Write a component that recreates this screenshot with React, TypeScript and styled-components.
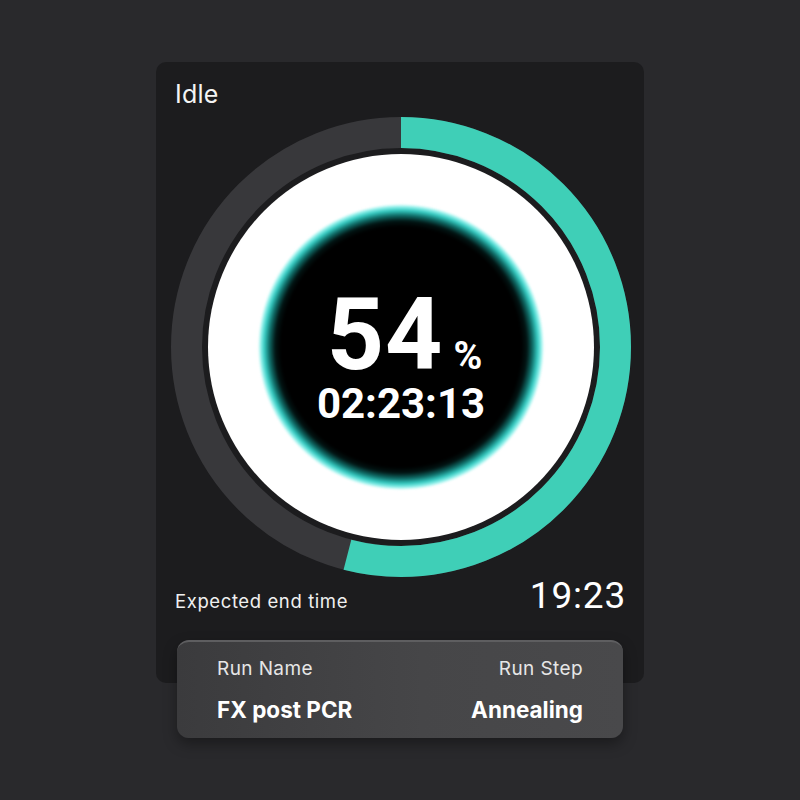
import styled, { createGlobalStyle } from "styled-components";

const GlobalStyle = createGlobalStyle`
  html, body {
    margin: 0;
    padding: 0;
    background: #29292c;
  }
  body {
    font-family: Inter, "Noto Sans", sans-serif;
    color: #ffffff;
  }
`;

const RING_SIZE = 460;
const RING_STROKE = 31;
const progress = 54;

export default function App() {
  const r = (RING_SIZE - RING_STROKE) / 2;
  const circumference = 2 * Math.PI * r;
  const filled = (circumference * progress) / 100;

  return (
    <Page>
      <GlobalStyle />
      <Card>
        <Status>Idle</Status>
        <Gauge>
          <svg width={RING_SIZE} height={RING_SIZE} viewBox={`0 0 ${RING_SIZE} ${RING_SIZE}`}>
            <circle
              cx={RING_SIZE / 2}
              cy={RING_SIZE / 2}
              r={r}
              fill="none"
              stroke="#38383b"
              strokeWidth={RING_STROKE}
            />
            <circle
              cx={RING_SIZE / 2}
              cy={RING_SIZE / 2}
              r={r}
              fill="none"
              stroke="#3fcfb7"
              strokeWidth={RING_STROKE}
              strokeDasharray={`${filled} ${circumference}`}
              transform={`rotate(-90 ${RING_SIZE / 2} ${RING_SIZE / 2})`}
            />
          </svg>
          <Dial>
            <Core>
              <Percent>
                54<small>%</small>
              </Percent>
              <Timer>02:23:13</Timer>
            </Core>
          </Dial>
        </Gauge>
        <EndRow>
          <EndLabel>Expected end time</EndLabel>
          <EndTime>19:23</EndTime>
        </EndRow>
      </Card>
      <InfoPanel>
        <InfoCol>
          <InfoLabel>Run Name</InfoLabel>
          <InfoValue>FX post PCR</InfoValue>
        </InfoCol>
        <InfoCol $right>
          <InfoLabel>Run Step</InfoLabel>
          <InfoValue>Annealing</InfoValue>
        </InfoCol>
      </InfoPanel>
    </Page>
  );
}

const Page = styled.div`
  width: 800px;
  height: 800px;
  box-sizing: border-box;
  padding-top: 62px;
  display: flex;
  flex-direction: column;
  align-items: center;
`;

const Card = styled.div`
  width: 488px;
  height: 621px;
  box-sizing: border-box;
  padding: 16px 19px 0 19px;
  background: #1c1c1e;
  border-radius: 10px;
  display: flex;
  flex-direction: column;
`;

const Status = styled.div`
  font-size: 25px;
  line-height: 32px;
  font-weight: 400;
  color: #f4f4f4;
  letter-spacing: 0.2px;
`;

const Gauge = styled.div`
  position: relative;
  width: ${RING_SIZE}px;
  height: ${RING_SIZE}px;
  margin: 7px 0 0 -4px;

  svg {
    display: block;
  }
`;

const Dial = styled.div`
  position: absolute;
  left: 50%;
  top: 50%;
  width: 386px;
  height: 386px;
  transform: translate(-50%, -50%);
  border-radius: 50%;
  background: #ffffff;
  display: flex;
  align-items: center;
  justify-content: center;
`;

const Core = styled.div`
  position: relative;
  width: 286px;
  height: 286px;
  display: flex;
  flex-direction: column;
  align-items: center;
  justify-content: center;
  font-family: Roboto, "DejaVu Sans", sans-serif;
  color: #fff;

  &::before {
    content: "";
    position: absolute;
    inset: 0;
    border-radius: 50%;
    background: radial-gradient(
      circle closest-side,
      #000 0%,
      #000 84%,
      #021413 88%,
      #0f6b66 92%,
      #35c9c0 95.5%,
      #8ef0ea 98%,
      #ffffff 100%
    );
    filter: blur(1.2px);
  }

  & > * {
    position: relative;
  }
`;

const Percent = styled.div`
  font-size: 100px;
  font-weight: 700;
  line-height: 64px;
  margin-top: 27px;
  padding-left: 8px;
  letter-spacing: 1px;

  small {
    font-size: 39px;
    margin-left: 10px;
  }
`;

const Timer = styled.div`
  font-size: 42px;
  font-weight: 700;
  line-height: 30px;
  letter-spacing: 0px;
  margin-top: 1px;
`;

const EndRow = styled.div`
  display: flex;
  justify-content: space-between;
  align-items: flex-end;
  margin-top: -2px;
`;

const EndLabel = styled.div`
  font-size: 18.5px;
  color: #f0f0f0;
  padding-bottom: 5px;
  letter-spacing: 0.6px;
`;

const EndTime = styled.div`
  font-family: Roboto, "DejaVu Sans", sans-serif;
  font-size: 37px;
  font-weight: 400;
  line-height: 42px;
  letter-spacing: 0.8px;
  margin-right: -1px;
`;

const InfoPanel = styled.div`
  width: 446px;
  height: 98px;
  margin-top: -43px;
  box-sizing: border-box;
  padding: 17px 40px 0 40px;
  border-radius: 12px;
  background: linear-gradient(90deg, #3b3b3d 0%, #464648 55%, #49494b 100%);
  border-top: 2px solid #5e5e60;
  box-shadow: 0 6px 14px rgba(0, 0, 0, 0.35);
  display: flex;
  justify-content: space-between;
`;

const InfoCol = styled.div<{ $right?: boolean }>`
  display: flex;
  flex-direction: column;
  align-items: ${(p) => (p.$right ? "flex-end" : "flex-start")};
  gap: 19px;
`;

const InfoLabel = styled.div`
  font-size: 19px;
  line-height: 20px;
  color: #e6e6e6;
  letter-spacing: 0.4px;
`;

const InfoValue = styled.div`
  font-size: 22.5px;
  line-height: 24px;
  font-weight: 700;
  color: #ffffff;
  letter-spacing: 0px;
`;
